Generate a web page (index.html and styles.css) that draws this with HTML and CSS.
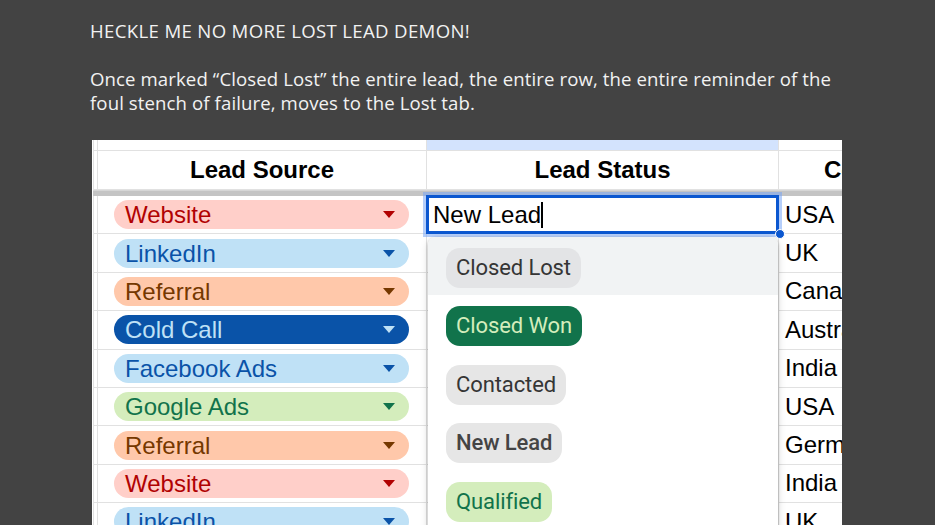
FILE: index.html
```html
<!DOCTYPE html>
<html>
<head>
<meta charset="utf-8">
<link rel="stylesheet" href="styles.css">
</head>
<body>
<div class="page">
  <p class="title">HECKLE ME NO MORE LOST LEAD DEMON!</p>
  <p class="para">Once marked “Closed Lost” the entire lead, the entire row, the entire reminder of the<br>foul stench of failure, moves to the Lost tab.</p>
  <div class="sheet">
    <div class="row strip"><div class="c0"></div><div class="ca"></div><div class="cb sel"></div><div class="cc"></div></div>
    <div class="row head"><div class="c0"></div><div class="ca">Lead Source</div><div class="cb">Lead Status</div><div class="cc">Country</div></div>
    <div class="freeze"></div>

    <div class="row data"><div class="c0"></div><div class="ca"><span class="chip red">Website<i class="arr"></i></span></div><div class="cb"></div><div class="cc">USA</div></div>
    <div class="row data"><div class="c0"></div><div class="ca"><span class="chip blue">LinkedIn<i class="arr"></i></span></div><div class="cb"></div><div class="cc">UK</div></div>
    <div class="row data"><div class="c0"></div><div class="ca"><span class="chip orange">Referral<i class="arr"></i></span></div><div class="cb"></div><div class="cc">Canada</div></div>
    <div class="row data"><div class="c0"></div><div class="ca"><span class="chip dblue">Cold Call<i class="arr"></i></span></div><div class="cb"></div><div class="cc">Australia</div></div>
    <div class="row data"><div class="c0"></div><div class="ca"><span class="chip blue">Facebook Ads<i class="arr"></i></span></div><div class="cb"></div><div class="cc">India</div></div>
    <div class="row data"><div class="c0"></div><div class="ca"><span class="chip green">Google Ads<i class="arr"></i></span></div><div class="cb"></div><div class="cc">USA</div></div>
    <div class="row data"><div class="c0"></div><div class="ca"><span class="chip orange">Referral<i class="arr"></i></span></div><div class="cb"></div><div class="cc">Germany</div></div>
    <div class="row data"><div class="c0"></div><div class="ca"><span class="chip red">Website<i class="arr"></i></span></div><div class="cb"></div><div class="cc">India</div></div>
    <div class="row data"><div class="c0"></div><div class="ca"><span class="chip blue">LinkedIn<i class="arr"></i></span></div><div class="cb"></div><div class="cc">UK</div></div>

    <div class="editor">New Lead<span class="caret"></span></div>
    <span class="handle"></span>

    <div class="dropdown">
      <div class="opt hover"><span class="pill gray">Closed Lost</span></div>
      <div class="opt"><span class="pill dgreen">Closed Won</span></div>
      <div class="opt"><span class="pill gray">Contacted</span></div>
      <div class="opt"><span class="pill gray strong">New Lead</span></div>
      <div class="opt"><span class="pill lgreen">Qualified</span></div>
    </div>
  </div>
</div>
</body>
</html>
```
FILE: styles.css
```css
html, body {
  margin: 0;
  padding: 0;
  background: #434343;
  overflow: hidden;
}
.page {
  padding: 19px 0 0 90px;
  height: 506px;
  overflow: hidden;
}
.title, .para {
  margin: 0;
  color: #f2f2f2;
  font-family: "Open Sans", Lato, sans-serif;
  font-size: 18.6px;
  letter-spacing: 0.1px;
  line-height: 24px;
  white-space: nowrap;
}
.title { margin-bottom: 24px; letter-spacing: 0.34px; }
.sheet {
  position: relative;
  margin: 25px 0 0 2px;
  width: 750px;
  height: 400px;
  background: #fff;
  padding-left: 1px;
  box-sizing: border-box;
  overflow: hidden;
  font-family: "Liberation Sans", Arial, sans-serif;
}
.row {
  display: flex;
  box-sizing: border-box;
  border-bottom: 1px solid #e1e1e1;
}
.row > div {
  box-sizing: border-box;
  border-right: 1px solid #e1e1e1;
  flex: none;
}
.c0 { width: 5px; border-left: 1px solid #e1e1e1; }
.ca { width: 329px; }
.cb { width: 352px; }
.cc { width: 120px; }
.strip { height: 11px; }
.strip .sel { background: #d3e3fd; }
.head { height: 39px; }
.head > div {
  font-weight: bold;
  font-size: 24px;
  color: #000;
  line-height: 38px;
  text-align: center;
  white-space: nowrap;
}
.head .cc { text-align: left; padding-left: 45px; }
.freeze {
  height: 6px;
  background: #c4c4c4;
  border-top: 1px solid #d6d6d6;
  box-sizing: border-box;
}
.data { height: 38.4px; }
.data > div {
  display: flex;
  align-items: center;
}
.data .ca { padding-left: 16px; }
.data .cc {
  font-size: 24px;
  color: #000;
  padding-left: 6px;
  white-space: nowrap;
}
.chip {
  display: flex;
  align-items: center;
  justify-content: space-between;
  width: 295px;
  height: 29px;
  border-radius: 15px;
  padding: 0 14px 0 11px;
  box-sizing: border-box;
  font-size: 24px;
  line-height: 29px;
  white-space: nowrap;
}
.arr {
  width: 0;
  height: 0;
  border-left: 6.5px solid transparent;
  border-right: 6.5px solid transparent;
  border-top: 7px solid currentColor;
}
.red { background: #ffcfc9; color: #b10202; }
.blue { background: #bfe1f6; color: #0a53a8; }
.orange { background: #ffc8aa; color: #753800; }
.dblue { background: #0a53a8; color: #bfe1f6; }
.green { background: #d4edbc; color: #11734b; }

.editor {
  position: absolute;
  left: 334px;
  top: 55px;
  width: 353px;
  height: 39px;
  box-sizing: border-box;
  border: 3px solid #0b57d0;
  box-shadow: 0 0 0 3px rgba(120, 165, 245, 0.55);
  background: #fff;
  font-size: 24px;
  line-height: 32px;
  padding-left: 4px;
  color: #000;
  display: flex;
  align-items: center;
}
.caret {
  display: inline-block;
  width: 1.5px;
  height: 26px;
  background: #000;
}
.handle {
  position: absolute;
  left: 683px;
  top: 89px;
  width: 8px;
  height: 8px;
  border-radius: 50%;
  background: #0b57d0;
  border: 1px solid #fff;
}
.dropdown {
  position: absolute;
  left: 336px;
  top: 97px;
  width: 350px;
  height: 340px;
  background: #fff;
  border-radius: 8px;
  box-shadow: 0 1px 3px rgba(0,0,0,0.25), 0 3px 8px rgba(0,0,0,0.15);
  overflow: hidden;
  font-family: Roboto, "Liberation Sans", sans-serif;
}
.opt {
  height: 58.4px;
  box-sizing: border-box;
  padding: 11px 0 0 18px;
}
.opt.hover { background: #f1f3f4; }
.pill {
  display: inline-block;
  height: 40px;
  line-height: 40px;
  padding: 0 10px;
  border-radius: 14px;
  font-size: 22px;
  letter-spacing: -0.1px;
  white-space: nowrap;
}
.gray { background: #e6e6e6; color: #353535; }
.hover .gray { background: #e3e4e6; }
.strong { color: #444; font-weight: 500; }
.dgreen { background: #11734b; color: #d4edbc; }
.lgreen { background: #d4edbc; color: #11734b; }
```
